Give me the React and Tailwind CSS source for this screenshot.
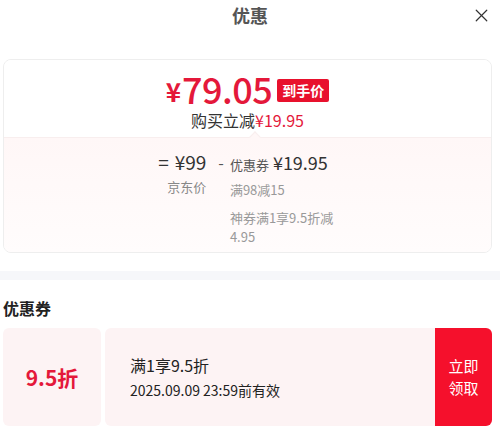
import { X } from 'lucide-react';

export default function App() {
  return (
    <div
      className="w-[500px] h-[436px] bg-white overflow-hidden text-[#222]"
      style={{ fontFamily: '"Noto Sans CJK SC", "Noto Sans", sans-serif' }}
    >
      {/* header */}
      <div className="relative h-[30px] flex items-center justify-center">
        <span className="text-[18px] font-bold text-[#555] leading-none">优惠</span>
        <X className="absolute right-[8px] top-[5px] text-[#333]" size={21} strokeWidth={1.4} />
      </div>

      {/* summary card */}
      <div className="mt-[29px] ml-[3px] w-[489px] h-[194px] rounded-[8px] border border-[#eeeeee] overflow-hidden flex flex-col">
        <div className="h-[77px] bg-white flex flex-col items-center pt-[11px]">
          <div className="flex items-center text-[#e4183a] leading-none h-[34px]">
            <span className="text-[26px] font-bold mt-[6px] mr-[1px]">¥</span>
            <span className="text-[36px] font-medium tracking-[-0.5px]">79.05</span>
            <span className="ml-[5px] mt-[4px] bg-[#e8112d] text-white text-[14px] font-bold px-[5px] h-[23px] flex items-center rounded-[2px]">
              到手价
            </span>
          </div>
          <div className="mt-[6px] text-[16px] leading-[18px]">
            <span className="text-[#333]">购买立减</span>
            <span className="text-[#e4183a]">¥19.95</span>
          </div>
        </div>
        <div className="relative flex-1 bg-gradient-to-b from-[#fff7f7] to-[#fffcfc] border-t border-[#f8eeee] flex justify-center pt-[12px]">
          <div className="absolute left-[247px] -top-[5px] w-[8px] h-[8px] bg-[#fff7f7] border-l border-t border-[#f8eeee] rotate-45" />
          <div className="flex items-start ml-[-1px]">
            <div className="flex flex-col items-end">
              <div className="text-[19px] leading-[24px] text-[#333] whitespace-nowrap">
                <span className="mr-[6px]">=</span>¥99
              </div>
              <div className="text-[13px] leading-[24px] text-[#888] mt-[1px]">京东价</div>
            </div>
            <div className="text-[16px] leading-[24px] text-[#555] ml-[12px] mr-[6px]">-</div>
            <div className="flex flex-col w-[106px]">
              <div className="flex items-baseline leading-[24px] whitespace-nowrap">
                <span className="text-[13px] text-[#555]">优惠券</span>
                <span className="text-[18px] text-[#333] ml-[4px]">¥19.95</span>
              </div>
              <div className="text-[13px] leading-[24px] text-[#999] mt-[1px]">满98减15</div>
              <div className="text-[13px] leading-[19px] text-[#999] mt-[6px]">神券满1享9.5折减4.95</div>
            </div>
          </div>
        </div>
      </div>

      {/* divider band */}
      <div className="mt-[18px] h-[9px] bg-[#f6f7fa]" />

      {/* coupons */}
      <div className="pl-[3px] pr-[8px]">
        <div className="mt-[20px] text-[16px] font-bold leading-none text-[#222]">优惠券</div>
        <div className="mt-[12px] h-[98px] flex gap-[4px]">
          <div className="w-[98px] rounded-[6px] bg-[#fdf3f4] flex items-center justify-center">
            <span className="text-[21px] font-bold text-[#e4183a] leading-none">9.5折</span>
          </div>
          <div className="flex-1 flex rounded-[6px] overflow-hidden">
            <div className="flex-1 bg-[#fdf3f4] pl-[25px] flex flex-col justify-center">
              <div className="text-[16px] leading-none text-[#222]">满1享9.5折</div>
              <div className="mt-[10px] text-[14px] leading-none text-[#222]">2025.09.09 23:59前有效</div>
            </div>
            <div className="w-[57px] bg-[#f5102c] flex items-center justify-center">
              <span className="text-white text-[15px] leading-[22px] text-center">立即<br />领取</span>
            </div>
          </div>
        </div>
      </div>
    </div>
  );
}
